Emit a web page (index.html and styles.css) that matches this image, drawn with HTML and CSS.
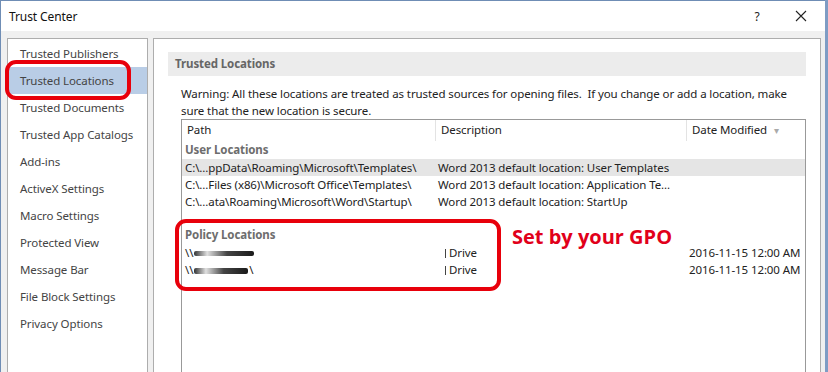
FILE: index.html
```html
<!DOCTYPE html>
<html lang="en">
<head>
  <meta charset="UTF-8">
  <title>Trust Center</title>
  <link rel="stylesheet" href="styles.css">
</head>
<body>
  <div class="window">
    <div class="titlebar">
      <span class="title">Trust Center</span>
      <span class="help">?</span>
      <span class="close">
        <svg width="12" height="12" viewBox="0 0 12 12"><path d="M1 1 L11 11 M11 1 L1 11" stroke="#222" stroke-width="1.1"/></svg>
      </span>
    </div>

    <div class="content">
      <div class="nav">
        <div class="nav-item">Trusted Publishers</div>
        <div class="nav-item selected">Trusted Locations</div>
        <div class="nav-item">Trusted Documents</div>
        <div class="nav-item">Trusted App Catalogs</div>
        <div class="nav-item">Add-ins</div>
        <div class="nav-item">ActiveX Settings</div>
        <div class="nav-item">Macro Settings</div>
        <div class="nav-item">Protected View</div>
        <div class="nav-item">Message Bar</div>
        <div class="nav-item">File Block Settings</div>
        <div class="nav-item">Privacy Options</div>
        <div class="mark nav-mark"></div>
      </div>

      <div class="panel">
        <div class="section-head">Trusted Locations</div>
        <p class="warning">Warning: All these locations are treated as trusted sources for opening files.&nbsp; If you change or add a location, make sure that the new location is secure.</p>

        <div class="table">
          <div class="row header">
            <div class="cell">Path</div>
            <div class="cell sep">Description</div>
            <div class="cell sep">Date Modified <span class="sort">&#9662;</span></div>
          </div>
          <div class="group">User Locations</div>
          <div class="row selected">
            <div class="cell">C:\...ppData\Roaming\Microsoft\Templates\</div>
            <div class="cell">Word 2013 default location: User Templates</div>
            <div class="cell"></div>
          </div>
          <div class="row">
            <div class="cell">C:\...Files (x86)\Microsoft Office\Templates\</div>
            <div class="cell">Word 2013 default location: Application Te...</div>
            <div class="cell"></div>
          </div>
          <div class="row">
            <div class="cell">C:\...ata\Roaming\Microsoft\Word\Startup\</div>
            <div class="cell">Word 2013 default location: StartUp</div>
            <div class="cell"></div>
          </div>
          <div class="group policy">Policy Locations</div>
          <div class="row">
            <div class="cell">\\<span class="redact r1"></span></div>
            <div class="cell drive"><span class="tick"></span>Drive</div>
            <div class="cell">2016-11-15 12:00 AM</div>
          </div>
          <div class="row">
            <div class="cell">\\<span class="redact r2"></span>\</div>
            <div class="cell drive"><span class="tick"></span>Drive</div>
            <div class="cell">2016-11-15 12:00 AM</div>
          </div>
          <div class="mark policy-mark"></div>
          <div class="note">Set by your GPO</div>
        </div>
      </div>
    </div>
  </div>
</body>
</html>
```

FILE: styles.css
```css
body { margin: 0; background: #f0f0f0; font-family: "Noto Sans", "Open Sans", sans-serif; font-size: 11.5px; letter-spacing: -0.1px; color: #222; }
.window { width: 828px; height: 372px; box-sizing: border-box; border-left: 1px solid #6f8db5; border-right: 3px solid #7f9cc4; overflow: hidden; }
.titlebar { height: 31px; background: #fff; display: flex; align-items: center; padding: 0 0 0 8px; border-top: 1px solid #6f8db5; box-sizing: border-box; font-size: 12px; }
.title { flex: 1; color: #111; }
.help { width: 44px; text-align: center; color: #222; }
.close { width: 44px; display: flex; justify-content: center; margin-right: 2px; }

.content { display: flex; gap: 5px; padding: 7px 4px 0 6px; height: 341px; box-sizing: border-box; }
.nav { position: relative; width: 141px; background: #fff; border: 1px solid #adadad; border-bottom: none; padding-top: 1px; box-sizing: border-box; }
.nav-item { height: 27px; line-height: 27px; padding-left: 12px; color: #444; white-space: nowrap; }
.nav-item.selected { background: #b9cde6; }

.panel { flex: 1; background: #fff; border: 1px solid #adadad; border-bottom: none; padding: 13px 14px 0 14px; display: flex; flex-direction: column; }
.section-head { background: #ececec; height: 24px; line-height: 23px; padding-left: 7px; font-weight: bold; color: #666; }
.warning { margin: 9px 0 0 13px; line-height: 17px; color: #222; }

.table { position: relative; flex: 1; margin-left: 13px; border: 1px solid #999; border-bottom: none; }
.row { display: grid; grid-template-columns: 253px 251px 1fr; height: 17px; line-height: 17px; }
.row .cell { padding-left: 3px; white-space: nowrap; overflow: hidden; }
.row.header { height: 21px; line-height: 20px; }
.row.header .cell { padding-left: 5px; }
.row.header .sep { border-left: 1px solid #e3e3e3; }
.sort { color: #aaa; font-size: 10px; margin-left: 4px; }
.row.selected { background: #e5e5e5; }
.group { height: 18px; line-height: 18px; padding-left: 3px; font-weight: bold; color: #6d6d6d; }
.group.policy { margin-top: 16px; }

.redact { display: inline-block; height: 5px; vertical-align: middle; background: linear-gradient(90deg, #333 0%, #e0e0e0 22%, #444 55%, #1a1a1a 100%); border-radius: 2px; }
.r1 { width: 60px; margin-left: 1px; }
.r2 { width: 54px; height: 6px; margin: 0 1px; }
.drive { padding-left: 10px !important; }
.tick { display: inline-block; width: 1px; height: 9px; background: #444; vertical-align: middle; margin-right: 3px; }

.mark { position: absolute; border: 4px solid #e8000b; border-radius: 11px; box-sizing: border-box; }
.nav-mark { left: -3px; top: 21px; width: 126px; height: 40px; }
.policy-mark { left: -7px; top: 99px; width: 326px; height: 72px; }
.note { position: absolute; left: 330px; top: 103px; font-size: 20px; letter-spacing: 0; font-weight: bold; color: #e1001a; font-family: "Open Sans", "Noto Sans", sans-serif; }
```
